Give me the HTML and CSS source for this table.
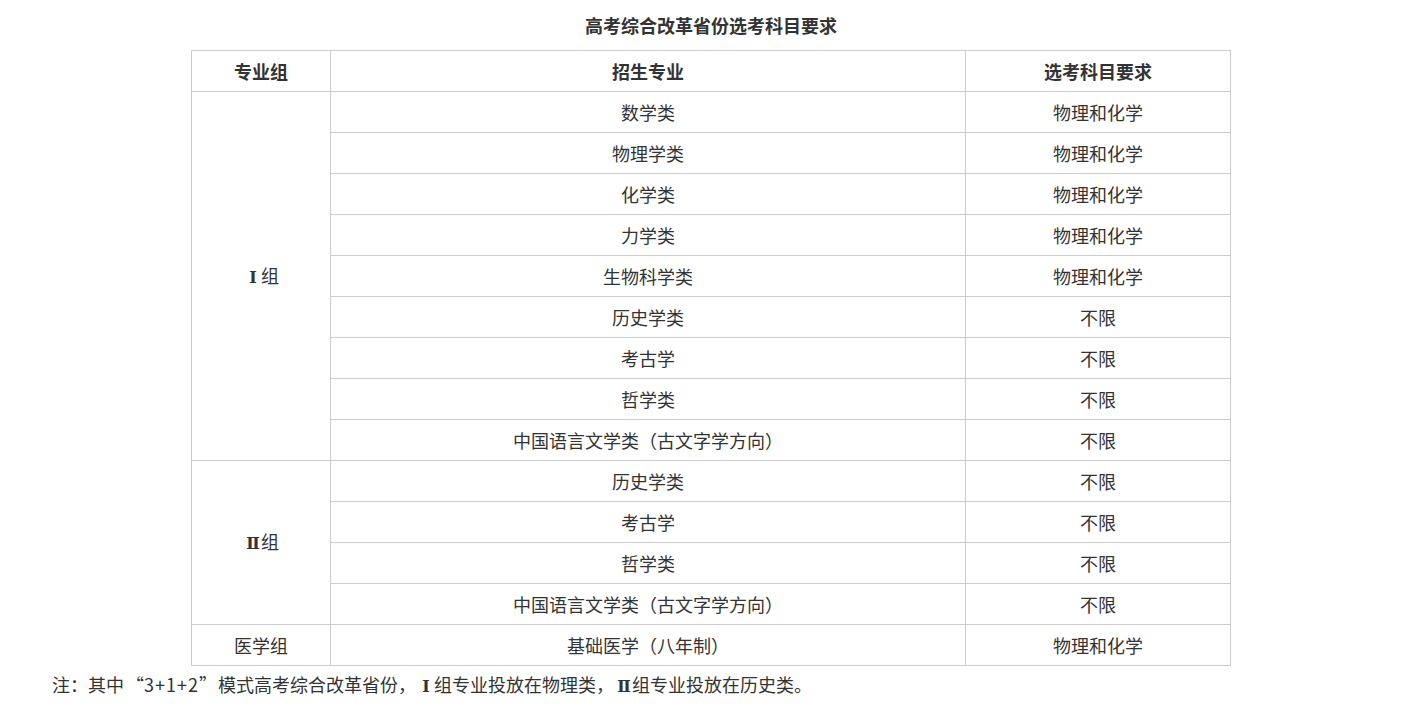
FILE: index.html
```html
<!DOCTYPE html>
<html lang="zh-CN">
<head>
<meta charset="utf-8">
<title>高考综合改革省份选考科目要求</title>
<link rel="stylesheet" href="styles.css">
</head>
<body>
<div class="page">
  <h1 class="title">高考综合改革省份选考科目要求</h1>
  <table class="req">
    <colgroup>
      <col class="c1"><col class="c2"><col class="c3">
    </colgroup>
    <thead>
      <tr><th>专业组</th><th>招生专业</th><th>选考科目要求</th></tr>
    </thead>
    <tbody>
      <tr><td rowspan="9"><span class="rn">Ⅰ</span>组</td><td>数学类</td><td>物理和化学</td></tr>
      <tr><td>物理学类</td><td>物理和化学</td></tr>
      <tr><td>化学类</td><td>物理和化学</td></tr>
      <tr><td>力学类</td><td>物理和化学</td></tr>
      <tr><td>生物科学类</td><td>物理和化学</td></tr>
      <tr><td>历史学类</td><td>不限</td></tr>
      <tr><td>考古学</td><td>不限</td></tr>
      <tr><td>哲学类</td><td>不限</td></tr>
      <tr><td>中国语言文学类（古文字学方向）</td><td>不限</td></tr>
      <tr><td rowspan="4"><span class="rn">Ⅱ</span>组</td><td>历史学类</td><td>不限</td></tr>
      <tr><td>考古学</td><td>不限</td></tr>
      <tr><td>哲学类</td><td>不限</td></tr>
      <tr><td>中国语言文学类（古文字学方向）</td><td>不限</td></tr>
      <tr><td>医学组</td><td>基础医学（八年制）</td><td>物理和化学</td></tr>
    </tbody>
  </table>
  <p class="note">注：其中<span class="ql">“</span><span class="num">3+1+2</span><span class="qr">”</span>模式高考综合改革省份，<span class="rn">Ⅰ</span>组专业投放在物理类，<span class="rn">Ⅱ</span>组专业投放在历史类。</p>
</div>
</body>
</html>
```

FILE: styles.css
```css
html, body {
  margin: 0;
  padding: 0;
  background: #fff;
}
body {
  font-family: "Noto Sans CJK SC", "Noto Sans", sans-serif;
  color: #333;
  font-size: 18px;
}
.page {
  margin: 0 32px 0 52px;
  padding-top: 11px;
}
.title {
  margin: 0;
  text-align: center;
  font-size: 18px;
  font-weight: bold;
  line-height: 28px;
  height: 39px;
}
.req {
  border-collapse: collapse;
  margin: 0 auto;
  width: 1039px;
  table-layout: fixed;
}
.req .c1 { width: 139px; }
.req .c2 { width: 635px; }
.req .c3 { width: 265px; }
.req th, .req td {
  border: 1px solid #ccc;
  height: 41px;
  padding: 0;
  text-align: center;
  vertical-align: middle;
  font-size: 18px;
  line-height: 24px;
  box-sizing: border-box;
}
.req th {
  font-weight: bold;
}
.rn {
  display: inline-block;
  width: 1em;
  text-align: center;
  font-family: "DejaVu Serif", "Liberation Serif", serif;
  font-weight: bold;
  font-size: 16px;
  margin-left: 2px;
}
.ql { margin-left: 2px; }
.qr { margin-right: 1px; }
.num {
  letter-spacing: 1px;
}
.note {
  margin: 0;
  padding-top: 4px;
  font-size: 18px;
  line-height: 28px;
}
```
